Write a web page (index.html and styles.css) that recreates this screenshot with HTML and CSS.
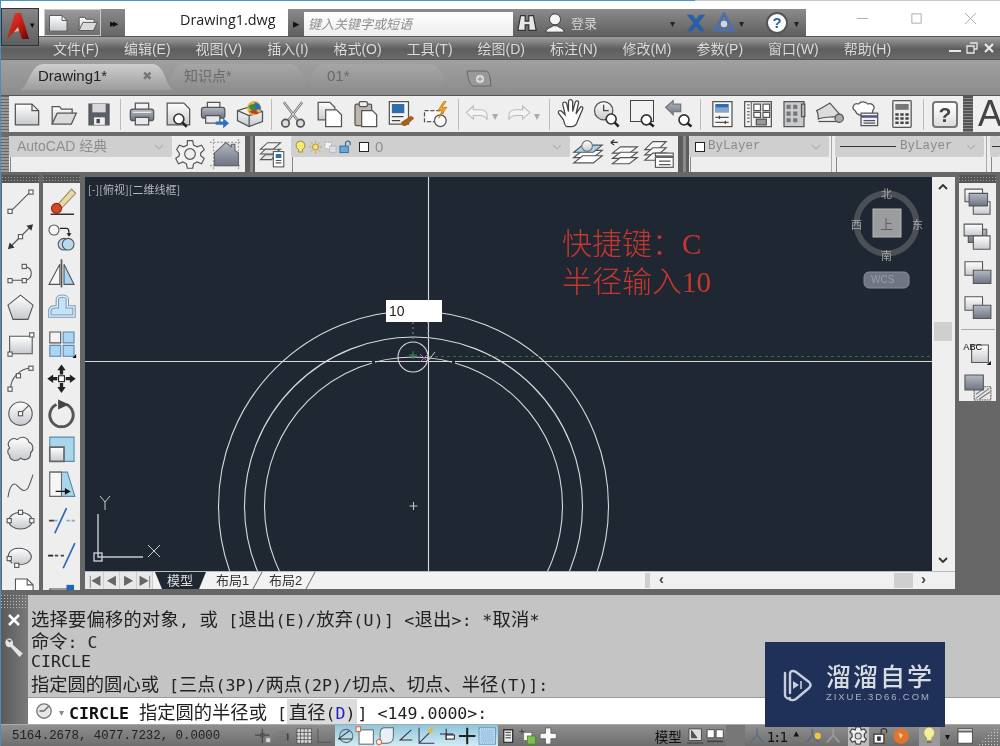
FILE: index.html
```html
<!DOCTYPE html>
<html lang="zh">
<head>
<meta charset="utf-8">
<title>AutoCAD - Drawing1.dwg</title>
<link rel="stylesheet" href="styles.css">
</head>
<body>
<svg class="defs" aria-hidden="true">
  <defs>
    <linearGradient id="gw" x1="0" y1="0" x2="0" y2="1"><stop offset="0" stop-color="#fff"/><stop offset="1" stop-color="#c6c9ce"/></linearGradient>
    <linearGradient id="gd" x1="0" y1="0" x2="0" y2="1"><stop offset="0" stop-color="#b5bac4"/><stop offset="1" stop-color="#6d7482"/></linearGradient>
    <linearGradient id="gb" x1="0" y1="0" x2="0" y2="1"><stop offset="0" stop-color="#cfe8f6"/><stop offset="1" stop-color="#93c6e6"/></linearGradient>
    <linearGradient id="gr" x1="0" y1="0" x2="1" y2="1"><stop offset="0" stop-color="#ec4033"/><stop offset=".6" stop-color="#b81a12"/><stop offset="1" stop-color="#5e0806"/></linearGradient>

    <symbol id="new" viewBox="0 0 36 36"><path d="M4 6h20l8 8v17H4z" fill="url(#gw)"/><path d="M24 6v8h8"/></symbol>
    <symbol id="open" viewBox="0 0 36 36"><path d="M5 30V9h9l2 3h13v5" fill="url(#gw)"/><path d="M5 30l6-13h23l-6 13z" fill="#d9dadb"/></symbol>
    <symbol id="save" viewBox="0 0 36 36"><path d="M6 6h24v25H6z" fill="#595e68"/><path d="M10 6h16v10H10z" fill="#d6d8dc" stroke="none"/><path d="M12 22h13v9H12z" fill="#eee" stroke="none"/><path d="M15 24h4v5h-4z" fill="#444" stroke="none"/></symbol>
    <symbol id="print" viewBox="0 0 36 36"><path d="M10 12V5h16v7" fill="#f3f3f3"/><rect x="4" y="12" width="28" height="14" rx="3" fill="url(#gd)"/><path d="M10 22h16v9H10z" fill="#e7e9ec"/><path d="M7 16h22" stroke="#eee"/></symbol>
    <symbol id="prev" viewBox="0 0 36 36"><path d="M5 5h20l7 7v19H5z" fill="url(#gw)"/><circle cx="19" cy="24" r="6" fill="#fff" stroke="#333" stroke-width="2"/><path d="M23.500 28.500l5 5" stroke="#222" stroke-width="3"/></symbol>
    <symbol id="plot" viewBox="0 0 36 36"><path d="M10 10V4h15v6" fill="#f3f3f3"/><rect x="3" y="10" width="28" height="13" rx="3" fill="url(#gd)"/><path d="M8 20h17v9H8z" fill="#e7e9ec"/><path d="M20 27h9v-4l7 6-7 6v-4h-9z" fill="#2a72c6" stroke="none"/></symbol>
    <symbol id="ball" viewBox="0 0 36 36"><path d="M3 14l16-5 14 6v12l-16 6-14-7z" fill="url(#gw)"/><path d="M3 14l14 6v13M17 20l16-5"/><circle cx="23" cy="11" r="8.500" fill="#e0b33a" stroke="none"/><path d="M16 9c5-5 11-3 14 1l-8 7z" fill="#3d8a3c" stroke="none"/><path d="M23 4a8 8 0 0 1 8 9l-6-1z" fill="#2a6cc4" stroke="none"/><path d="M17 15c3 3 8 4 12 2l-5-4z" fill="#c23a35" stroke="none"/></symbol>
    <symbol id="cut" viewBox="0 0 36 36"><path d="M7 4l17 22M29 4L12 26" stroke="#777" stroke-width="3"/><path d="M7 4l17 22M29 4L12 26" stroke="#eee" stroke-width="1"/><circle cx="9" cy="29" r="4.500" fill="#ddd" stroke-width="2"/><circle cx="27" cy="29" r="4.500" fill="#ddd" stroke-width="2"/></symbol>
    <symbol id="copy" viewBox="0 0 36 36"><path d="M5 4h14l6 6v15H5z" fill="url(#gw)"/><path d="M14 13h13l6 6v14H14z" fill="#fff"/></symbol>
    <symbol id="paste" viewBox="0 0 36 36"><rect x="6" y="6" width="20" height="26" rx="2" fill="#bcb6ab"/><rect x="11" y="3" width="10" height="6" rx="2" fill="#eee"/><path d="M14 14h13l5 5v14H14z" fill="#fff"/></symbol>
    <symbol id="match" viewBox="0 0 36 36"><path d="M4 3h23v27H4z" fill="#f7f7f7"/><path d="M7 6h15v11H7z" fill="#2f6ea8" stroke="none"/><path d="M7 21h14M7 26h10" stroke="#444"/><path d="M18 28l12-8 4 3-10 9c-3 1-6 0-6-4z" fill="#a75f1d" stroke="none"/></symbol>
    <symbol id="bolt" viewBox="0 0 36 36"><rect x="3" y="14" width="22" height="13" fill="#fbfbfb" stroke-dasharray="5 2"/><circle cx="22" cy="26" r="7" fill="#fafafa"/><path d="M26 3l-7 11h5l-4 9 10-13h-6l5-7z" fill="#f0a51e" stroke="#b96d10" stroke-width=".8"/></symbol>
    <symbol id="undo" viewBox="0 0 36 36"><path d="M3 16l10-9v5h9c7 0 10 4 10 8v6c-2-5-5-6-10-6h-9v5z" fill="#f4f4f4" stroke="#bbb"/></symbol>
    <symbol id="redo" viewBox="0 0 36 36"><path d="M33 16L23 7v5h-9C7 12 4 16 4 20v6c2-5 5-6 10-6h9v5z" fill="#f4f4f4" stroke="#bbb"/></symbol>
    <symbol id="hand" viewBox="0 0 36 36"><path d="M9 25L3 17c-1-3 2-4 4-2l4 4L8 6c0-3 4-3 5 0l2 9V3c0-3 4-3 5 0v12l3-11c1-3 5-2 4 1l-3 13 5-8c2-2 4 0 3 2l-6 14c-1 4-3 7-7 7h-6c-2 0-3-4-4-8z" fill="#fff" stroke="#444"/></symbol>
    <symbol id="zrt" viewBox="0 0 36 36"><circle cx="14" cy="14" r="11" fill="url(#gw)"/><path d="M14 7v7h6" stroke="#444"/><circle cx="23" cy="24" r="6" fill="#fff" stroke="#333" stroke-width="2"/><path d="M27 28l5 5" stroke="#222" stroke-width="3"/></symbol>
    <symbol id="zwin" viewBox="0 0 36 36"><circle cx="22" cy="25" r="6" fill="#fff" stroke="#333" stroke-width="2"/><path d="M26 29l5 4" stroke="#222" stroke-width="3"/></symbol>
    <symbol id="zprev" viewBox="0 0 36 36"><path d="M2 10l9-8v4h9v9h-9v4z" fill="url(#gd)" stroke="#777"/><circle cx="24" cy="25" r="6" fill="#fff" stroke="#333" stroke-width="2"/><path d="M28 29l5 4" stroke="#222" stroke-width="3"/></symbol>
    <symbol id="prop" viewBox="0 0 36 36"><path d="M7 3h23v30H7z" fill="#f7f7f7"/><path d="M10 6h16v10H10z" fill="#2f6ea8" stroke="none"/><path d="M10 10h16v6H10z" fill="#85a7c9" stroke="none"/><path d="M10 22h16M10 28h16"/><path d="M15 20v4M22 26v4" stroke="#444"/></symbol>
    <symbol id="design" viewBox="0 0 36 36"><path d="M2 3h32v30H2z" fill="#f3f3f3"/><path d="M10 3v30" stroke="#777"/><path d="M5 7h3M5 11h3M5 15h3M5 19h3M5 23h3M5 27h3" stroke="#666"/><path d="M13 6h8v8h-8zM24 6h8v8h-8zM13 16h8v6h-8zM24 16h8v6h-8z" fill="#fff" stroke="#555"/><path d="M16 24h12v7H16z" fill="#999"/></symbol>
    <symbol id="tool" viewBox="0 0 36 36"><path d="M6 3h24v30H6z" fill="#c9cbce"/><path d="M9 7h5v5H9zM17 7h5v5h-5zM9 15h5v5H9zM17 15h5v5h-5zM9 23h5v5H9zM17 23h5v5h-5z" fill="#777" stroke="none"/><path d="M27 6h4v15h-4z" fill="#bbb"/></symbol>
    <symbol id="sheet" viewBox="0 0 36 36"><path d="M2 14c6-3 12-7 16-9l14 16c-6 0-22 0-28 3 0-4 0-7-2-10z" fill="#ddd"/><path d="M4 27h24" stroke="#555"/><circle cx="29" cy="23" r="5" fill="#aaa"/></symbol>
    <symbol id="markup" viewBox="0 0 36 36"><path d="M5 14c-5-3-2-10 4-8 3-4 9-3 11 0 6-2 10 4 6 8 1 5-6 7-9 4-3 3-10 2-12-4z" fill="#fff"/><path d="M12 17h20v15H12z" fill="#eef"/><path d="M12 21h20" stroke="#557" stroke-width="3"/><path d="M15 26h14M15 29h14"/></symbol>
    <symbol id="calc" viewBox="0 0 36 36"><rect x="7" y="2" width="22" height="32" rx="1" fill="#eee"/><path d="M10 6h16v7H10z" fill="#777" stroke="none"/><path d="M10 17h4v3h-4zM16 17h4v3h-4zM22 17h4v3h-4zM10 22h4v3h-4zM16 22h4v3h-4zM22 22h4v3h-4zM10 27h4v3h-4zM16 27h4v3h-4zM22 27h4v3h-4z" fill="#444" stroke="none"/></symbol>

    <symbol id="gear" viewBox="0 0 36 36"><path d="M15 3h6l1 5 4 2 5-2 3 5-4 4v3l4 3-3 6-5-2-4 2-1 5h-6l-1-5-4-2-5 2-3-6 4-3v-3L3 13l3-5 5 2 4-2z" fill="#f2f2f2"/><circle cx="18" cy="18" r="6" fill="#eee"/></symbol>
    <symbol id="home" viewBox="0 0 36 36"><path d="M4 1v34M32 1v34M0 5h36M0 31h36" stroke="#999" stroke-dasharray="2 2"/><path d="M5 17L18 5l6 5V7h4v7l4 3v14H5z" fill="url(#gd)" stroke="#666"/></symbol>
    <symbol id="lay1" viewBox="0 0 36 36"><path d="M3 12l9-8h16l-9 8z" fill="#f1f1f1"/><path d="M3 18l6-6h19l-9 6z" fill="#e6e6e6"/><path d="M3 25l6-6h12l-4 6z" fill="#e6e6e6"/><rect x="19" y="15" width="13" height="19" fill="#fff"/><path d="M22 18h7v5h-7z" fill="#2f6ea8" stroke="none"/><path d="M22 26h7M22 29h7"/></symbol>
    <symbol id="lay2" viewBox="0 0 36 36"><path d="M2 22l10-8h22l-10 8z" fill="#fff"/><path d="M2 28l10-8h22l-10 8z" fill="#fff"/><path d="M2 16l10-8h22l-10 8z" fill="#a5d5f0"/><circle cx="17" cy="9" r="6" fill="url(#gw)" stroke="#777"/></symbol>
    <symbol id="lay3" viewBox="0 0 36 36"><path d="M3 5h8M3 5l4-3M3 5l4 3" stroke="#333"/><path d="M5 17l9-7h19l-9 7z" fill="#fafafa"/><path d="M5 23l9-7h19l-9 7z" fill="#fafafa"/><path d="M5 29l9-7h19l-9 7z" fill="#fafafa"/></symbol>
    <symbol id="lay4" viewBox="0 0 36 36"><path d="M2 13l9-9h15l-9 9z" fill="#fafafa"/><path d="M2 19l9-8h15l-9 8z" fill="#fafafa"/><path d="M2 25l9-8h15l-9 8z" fill="#fafafa"/><rect x="14" y="17" width="20" height="16" fill="#fff"/><path d="M14 21h20" stroke="#666" stroke-width="3"/><path d="M18 26h13M18 30h13"/></symbol>

    <symbol id="l-line" viewBox="0 0 36 36"><path d="M6 30L30 6"/><rect x="3" y="27" width="5" height="5" fill="#fff"/><rect x="28" y="4" width="5" height="5" fill="#fff"/></symbol>
    <symbol id="l-xline" viewBox="0 0 36 36"><path d="M5 31L31 5" stroke-width="1.500"/><path d="M3 33l2-8 6 6zM33 3l-2 8-6-6z" fill="#333" stroke="none"/><rect x="15.500" y="15.500" width="5" height="5" fill="#fff"/></symbol>
    <symbol id="l-pline" viewBox="0 0 36 36"><path d="M6 27h19c8-3 8-15-1-16"/><rect x="3" y="25" width="5" height="5" fill="#fff"/><rect x="20" y="25" width="5" height="5" fill="#fff"/><rect x="20" y="8" width="5" height="5" fill="#fff"/></symbol>
    <symbol id="l-poly" viewBox="0 0 36 36"><path d="M18 3l15 12-6 17H9L3 15z" fill="url(#gw)"/></symbol>
    <symbol id="l-rect" viewBox="0 0 36 36"><path d="M5 9h27v21H5z" fill="url(#gw)"/><rect x="29" y="5" width="5" height="5" fill="#fff"/><rect x="3" y="28" width="5" height="5" fill="#fff"/></symbol>
    <symbol id="l-arc" viewBox="0 0 36 36"><path d="M6 31C6 17 17 6 31 5"/><rect x="3" y="28" width="5" height="5" fill="#fff"/><rect x="13" y="12" width="5" height="5" fill="#fff"/><rect x="28" y="3" width="5" height="5" fill="#fff"/></symbol>
    <symbol id="l-circle" viewBox="0 0 36 36"><circle cx="18" cy="18" r="14" fill="url(#gw)"/><path d="M18 18L28 8"/><rect x="15.500" y="15.500" width="5" height="5" fill="#fff"/></symbol>
    <symbol id="l-cloud" viewBox="0 0 36 36"><path d="M5 16C0 9 8 2 14 6c5-5 13-3 14 3 6 2 6 10 2 13 1 7-7 10-12 6-4 5-13 3-13-3-3-3-3-7 0-9z" fill="url(#gw)"/></symbol>
    <symbol id="l-spl" viewBox="0 0 36 36"><path d="M3 33C5 20 9 14 14 19c5 5 9 9 13 3 2-4 4-10 6-16"/></symbol>
    <symbol id="l-ell" viewBox="0 0 36 36"><ellipse cx="18" cy="18" rx="14" ry="10" fill="url(#gw)"/><rect x="15.500" y="5.500" width="5" height="5" fill="#fff"/><rect x="2" y="15.500" width="5" height="5" fill="#fff"/><rect x="29" y="15.500" width="5" height="5" fill="#fff"/></symbol>
    <symbol id="l-earc" viewBox="0 0 36 36"><path d="M8 27c-9-7-4-18 8-18 12 0 18 9 13 15-3 4-9 5-16 5" fill="url(#gw)"/><rect x="2" y="19" width="5" height="5" fill="#fff"/><rect x="11" y="27" width="5" height="5" fill="#fff"/></symbol>
    <symbol id="l-block" viewBox="0 0 36 36"><path d="M12 4h14l7 7v20H12z" fill="#fff"/><path d="M26 4v7h7"/><path d="M2 20h20v14H2z" fill="#eee"/></symbol>

    <symbol id="r-erase" viewBox="0 0 36 36"><path d="M5 33h28" stroke="#333" stroke-width="2"/><path d="M13 22L30 3l5 5-17 18z" fill="#e8d9a8" stroke="#9c8a60"/><circle cx="12" cy="26" r="6" fill="#d4482a" stroke="#8a2a15"/></symbol>
    <symbol id="r-copy" viewBox="0 0 36 36"><circle cx="9" cy="10" r="6" fill="#f7f7f7"/><path d="M16 8h8c3 0 3 3 3 7" stroke="#222"/><path d="M24 14l3 4 3-4z" fill="#222" stroke="none"/><circle cx="21" cy="27" r="7" fill="#b6daf2"/><circle cx="26" cy="27" r="7" fill="#b6daf2"/></symbol>
    <symbol id="r-mirror" viewBox="0 0 36 36"><path d="M3 32L16 8v24z" fill="#f7f7f7"/><path d="M18 2v34" stroke="#555" stroke-width="2"/><path d="M21 8l12 24H21z" fill="#a8d6f3"/></symbol>
    <symbol id="r-off" viewBox="0 0 36 36"><path d="M4 28v-6c0-3 2-5 6-5h3V8c0-5 12-5 12 0v9h8v11z" fill="#c6e2f4" stroke="#6f9cc0" stroke-width="4"/><path d="M4 28v-6c0-3 2-5 6-5h3V8c0-5 12-5 12 0v9h8v11z" fill="none" stroke="#f4f4f4" stroke-width="1.500"/></symbol>
    <symbol id="r-arr" viewBox="0 0 36 36"><path d="M4 4h13v13H4z" fill="#f3f3f3"/><path d="M20 4h13v13H20zM4 20h13v13H4zM20 20h13v13H20z" fill="#a8d6f3" stroke="#5c87a8"/><path d="M31 35l5-5v5z" fill="#111" stroke="none"/></symbol>
    <symbol id="r-move" viewBox="0 0 36 36"><path d="M18 1l5 7h-3v5h-4V8h-3zM18 35l-5-7h3v-5h4v5h3zM1 18l7-5v3h5v4H8v3zM35 18l-7 5v-3h-5v-4h5v-3z" fill="#222" stroke="none"/><rect x="14.500" y="14.500" width="7" height="7" fill="#fff" stroke="#222"/></symbol>
    <symbol id="r-rot" viewBox="0 0 36 36"><path d="M12 7a14 14 0 1 0 12 0" stroke="#555" stroke-width="3.500"/><path d="M14 1l13 6-13 6z" fill="#444" stroke="none"/></symbol>
    <symbol id="r-scale" viewBox="0 0 36 36"><path d="M4 3h29v29H4z" fill="#a8d6ea" stroke="#5c87a8"/><path d="M4 15h17v17H4z" fill="url(#gw)" stroke="#666" stroke-width="2"/></symbol>
    <symbol id="r-str" viewBox="0 0 36 36"><path d="M4 3h21l9 29H4z" fill="#a8d6ea" stroke="#5c87a8"/><path d="M4 3h14v29H4z" fill="#f6f6f6" stroke="#666"/><path d="M11 26h14" stroke="#111"/><path d="M22 22l7 4-7 4z" fill="#111" stroke="none"/></symbol>
    <symbol id="r-trim" viewBox="0 0 36 36"><path d="M3 18h6" stroke="#444" stroke-width="2"/><path d="M24 18h10" stroke="#87a9c9" stroke-width="2" stroke-dasharray="4 2"/><path d="M9 18h4" stroke="#87a9c9" stroke-width="2"/><path d="M10 33L24 3" stroke="#2a68b5" stroke-width="2"/></symbol>
    <symbol id="r-ext" viewBox="0 0 36 36"><path d="M2 18h6" stroke="#222" stroke-width="2"/><path d="M10 18h13" stroke="#444" stroke-width="2" stroke-dasharray="4 3"/><path d="M20 33L34 3" stroke="#2a68b5" stroke-width="2"/></symbol>
    <symbol id="r-brk" viewBox="0 0 36 36"><path d="M4 36V16h29" stroke="#444"/><rect x="24" y="11" width="9" height="9" fill="#1d66b8" stroke="none"/></symbol>

    <symbol id="o-a" viewBox="0 0 36 36"><path d="M3 3h21v15H3z" fill="url(#gw)"/><path d="M13 18h20v15H13z" fill="url(#gw)"/><path d="M8 8h22v15H8z" fill="url(#gd)"/></symbol>
    <symbol id="o-b" viewBox="0 0 36 36"><path d="M7 9h22v16H7z" fill="url(#gd)"/><path d="M2 3h22v14H2z" fill="url(#gw)"/><path d="M13 17h20v16H13z" fill="url(#gw)"/></symbol>
    <symbol id="o-c" viewBox="0 0 36 36"><path d="M3 5h21v16H3z" fill="url(#gw)"/><path d="M13 15h21v16H13z" fill="url(#gd)"/></symbol>
    <symbol id="o-e" viewBox="0 0 36 36"><path d="M14 18h20v16H14z" fill="#e8e8e8" stroke-dasharray="2 1"/><path d="M16 32l16-12M20 33l13-9M16 27l10-7" stroke="#777"/><path d="M3 4h22v18H3z" fill="url(#gd)"/></symbol>

    <symbol id="s-snap" viewBox="0 0 20 20"><path d="M9 2v16M1 9h16" stroke="#333"/><rect x="6.500" y="6.500" width="5" height="5" fill="#555" stroke="none"/><rect x="13" y="12" width="5" height="5" fill="#ddd" stroke="#888"/></symbol>
    <symbol id="s-dots" viewBox="0 0 20 20"><path d="M4 5h9M4 8h9M4 11h9M4 14h9" stroke="#666" stroke-dasharray="1 1.500"/><path d="M15 7v8" stroke="#444" stroke-width="2"/></symbol>
    <symbol id="s-grid" viewBox="0 0 20 20"><path d="M2 2h16v16H2zM2 6h16M2 10h16M2 14h16M6 2v16M10 2v16M14 2v16" stroke="#444" fill="#ddd" stroke-width=".8"/></symbol>
    <symbol id="s-ortho" viewBox="0 0 20 20"><path d="M3 2v15h15" stroke="#555"/></symbol>
    <symbol id="s-polar" viewBox="0 0 20 20"><circle cx="11" cy="10" r="6.500" stroke="#667"/><path d="M3 13L14 5M3 13h14" stroke="#333"/></symbol>
    <symbol id="s-osnap" viewBox="0 0 20 20"><rect x="4" y="4" width="14" height="14" fill="#fff" stroke="#666"/><rect x="1" y="1" width="4.500" height="4.500" fill="#fff" stroke="#d2643e"/></symbol>
    <symbol id="s-3d" viewBox="0 0 20 20"><path d="M5 14V7c0-3 2-5 5-5h8v9c0 4-3 6-6 6H6" fill="#e8f1f6" stroke="#666"/><circle cx="4" cy="16" r="2.500" fill="#fff" stroke="#d2643e"/></symbol>
    <symbol id="s-otrack" viewBox="0 0 20 20"><path d="M15 4L4 14h12" stroke="#333"/></symbol>
    <symbol id="s-ducs" viewBox="0 0 20 20"><path d="M3 2v15h15M3 17L15 5" stroke="#335"/><path d="M12 4l5-3-1 5-3 2z" fill="#e8b63a" stroke="none"/></symbol>
    <symbol id="s-dyn" viewBox="0 0 20 20"><path d="M9 3v11M3 8h13" stroke="#222"/><rect x="9" y="9" width="8" height="4" fill="#fff" stroke="#222"/></symbol>
    <symbol id="s-lw" viewBox="0 0 20 20"><path d="M10 2v16" stroke="#222" stroke-width="2"/><path d="M2 10h16" stroke="#222" stroke-width="2"/></symbol>
    <symbol id="s-tp" viewBox="0 0 20 20"><rect x="2" y="2" width="16" height="16" fill="#a5c9e8" stroke="#6a93b8"/><path d="M3 3h14v14H3z" fill="none" stroke="#e6f2fa" stroke-dasharray="1 1"/></symbol>
    <symbol id="s-qp" viewBox="0 0 20 20"><path d="M5 3h10v14H5z" fill="#eee" stroke="#333" stroke-width="1.500"/><path d="M7 6h6M7 9h6M7 12h6" stroke="#222"/></symbol>
    <symbol id="s-sc" viewBox="0 0 20 20"><path d="M3 2v6M0 5h6" stroke="#444"/><rect x="5" y="6" width="9" height="9" fill="#fff" stroke="#777"/><rect x="9" y="10" width="9" height="9" fill="#7fbf4d" stroke="#4c8c2a"/></symbol>
    <symbol id="s-plus" viewBox="0 0 20 20"><path d="M7 1h6v6h6v6h-6v6H7v-6H1V7h6z" fill="#fafafa" stroke="#666"/></symbol>
    <symbol id="s-paper" viewBox="0 0 20 20"><path d="M3 2h14v13H3z" fill="#ddd" stroke="#444"/><path d="M6 12V4l6 8z" fill="#555"/><path d="M1 18h18" stroke="#555" stroke-width="2"/></symbol>
    <symbol id="s-twin" viewBox="0 0 20 20"><path d="M1 3h8v9H1zM11 3h8v9h-8z" fill="#fff" stroke="#444"/><path d="M1 16h18" stroke="#444" stroke-width="2"/></symbol>
    <symbol id="s-anno" viewBox="0 0 20 20"><path d="M10 2v7L3 17M10 9l7 8" stroke="#5d6b84" stroke-width="1.500"/></symbol>
    <symbol id="s-anno2" viewBox="0 0 20 20"><path d="M9 2v7L3 17M9 9l7 8" stroke="#5d6b84" stroke-width="2"/><circle cx="15" cy="10" r="3.500" fill="#f1c33f" stroke="none"/></symbol>
    <symbol id="s-anno3" viewBox="0 0 20 20"><path d="M10 2v7L3 17M10 9l7 8" stroke="#999" stroke-width="2"/></symbol>
    <symbol id="s-gear" viewBox="0 0 20 20"><path d="M8 1h4l1 3 3-1 2 3-2 2v3l2 2-2 3-3-1-1 3H8l-1-3-3 1-2-3 2-2V8L2 6l2-3 3 1z" fill="#eee" stroke="#444" stroke-width="1.200"/><circle cx="10" cy="10" r="3" fill="#ddd" stroke="#444"/></symbol>
    <symbol id="s-lock" viewBox="0 0 20 20"><rect x="2" y="8" width="11" height="10" fill="#fff" stroke="#333" stroke-width="1.300"/><path d="M10 8V4c0-3 6-3 6 0v3" stroke="#333" stroke-width="1.300"/><rect x="6" y="11" width="3" height="4" fill="#333"/></symbol>
    <symbol id="s-ball" viewBox="0 0 20 20"><circle cx="10" cy="10" r="8.500" fill="#e0762e" stroke="none"/><path d="M7 6l5 3-3 4z" fill="#f5c896" stroke="none"/></symbol>
    <symbol id="s-bulb" viewBox="0 0 20 20"><path d="M10 1a6.500 6.500 0 0 0-3 12v3h6v-3a6.500 6.500 0 0 0-3-12z" fill="#f7ee9a" stroke="#a49a50"/><path d="M7.500 18h5" stroke="#666" stroke-width="1.500"/></symbol>
    <symbol id="s-win" viewBox="0 0 20 20"><rect x="2" y="2" width="16" height="16" fill="#fff" stroke="#444"/><path d="M2 5h16" stroke="#666" stroke-width="2"/></symbol>
  </defs>
</svg>

<div class="app">
  <div class="topline"></div>

  <div class="appbtn">
    <svg class="applogo" viewBox="0 0 22 26"><path d="M8 0h6l8 26h-7l-4-12-4 5-7 7z" fill="url(#gr)"/><path d="M7 19l4-5 1 4z" fill="#f4b0a0"/></svg>
    <span class="apparr">▾</span>
  </div>

  <header class="titlebar">
    <div class="qat">
      <svg class="q"><use href="#new"/></svg>
      <svg class="q"><use href="#open"/></svg>
    </div>
    <div class="qat-more">▸▸</div>
    <div class="doc">Drawing1.dwg</div>
    <div class="infobar">
      <span class="info-tri">▸</span>
      <div class="search">键入关键字或短语</div>
      <svg class="bi" viewBox="0 0 24 24"><path d="M5 4h5v6h4V4h5l3 16h-8v-6h-4v6H2z" fill="#e8e8e8" stroke="#333" stroke-width="1.300"/></svg>
      <svg class="bi user" viewBox="0 0 24 24"><circle cx="12" cy="8" r="6" fill="#f4f4f4" stroke="#333"/><path d="M2 22c1-5 6-5 8-7h4c2 2 7 2 8 7z" fill="#f4f4f4" stroke="#333"/></svg>
      <span class="login">登录</span>
      <span class="arr login-arr">▾</span>
      <svg class="bi x" viewBox="0 0 24 24"><path d="M2 3h6l4 5 4-5h6l-7 9 7 9h-6l-4-5-4 5H2l7-9z" fill="#2a5ea8"/></svg>
      <svg class="bi a360" viewBox="0 0 24 24"><path d="M12 2l10 18H2z" fill="none" stroke="#4a6fae" stroke-width="3"/><circle cx="12" cy="13" r="3.500" fill="#c8d6ee"/></svg>
      <span class="arr a360-arr">▾</span>
      <span class="help-round">?</span>
      <span class="arr">▾</span>
    </div>
    <div class="winctl">
      <svg class="wc" viewBox="0 0 14 14"><path d="M1 7h12"/></svg>
      <svg class="wc" viewBox="0 0 14 14"><path d="M2 2h10v10H2z"/></svg>
      <svg class="wc" viewBox="0 0 14 14"><path d="M1 1l12 12M13 1L1 13"/></svg>
    </div>
  </header>

  <nav class="menubar">
    <span>文件(F)</span><span>编辑(E)</span><span>视图(V)</span><span>插入(I)</span><span>格式(O)</span><span>工具(T)</span><span>绘图(D)</span><span>标注(N)</span><span>修改(M)</span><span>参数(P)</span><span>窗口(W)</span><span>帮助(H)</span>
    <div class="mdi">
      <svg class="m" viewBox="0 0 12 12"><path d="M0 9h12" stroke-width="2"/></svg>
      <svg class="m" viewBox="0 0 12 12"><path d="M4 1h7v6H8M1 4h7v7H1z" stroke-width="1.300"/></svg>
      <svg class="m" viewBox="0 0 12 12"><path d="M2 2l8 8M10 2l-8 8" stroke-width="2.200"/></svg>
    </div>
  </nav>

  <div class="tabs">
    <div class="tab active"><span>Drawing1*</span><b>✖</b></div>
    <div class="tab t2"><span>知识点*</span></div>
    <div class="tab t3"><span>01*</span></div>
    <svg class="tabplus" viewBox="0 0 26 18"><path d="M1 2h18c3 0 4 2 5 6l1 9H8C4 17 2 10 1 2z" fill="#999" stroke="#666"/><circle cx="14" cy="10" r="4" fill="#ddd"/><path d="M14 7.500v5M11.500 10h5" stroke="#888"/></svg>
  </div>

  <div class="tb1">
    <i class="grip"></i>
    <svg class="b"><use href="#new"/></svg>
    <svg class="b"><use href="#open"/></svg>
    <svg class="b"><use href="#save"/></svg>
    <i class="sep"></i>
    <svg class="b"><use href="#print"/></svg>
    <svg class="b"><use href="#prev"/></svg>
    <svg class="b"><use href="#plot"/></svg>
    <svg class="b"><use href="#ball"/></svg>
    <i class="sep"></i>
    <svg class="b"><use href="#cut"/></svg>
    <svg class="b"><use href="#copy"/></svg>
    <svg class="b"><use href="#paste"/></svg>
    <svg class="b"><use href="#match"/></svg>
    <svg class="b"><use href="#bolt"/></svg>
    <i class="sep"></i>
    <svg class="b n"><use href="#undo"/></svg><span class="dn">▾</span>
    <svg class="b n"><use href="#redo"/></svg><span class="dn">▾</span>
    <i class="sep"></i>
    <svg class="b"><use href="#hand"/></svg>
    <svg class="b"><use href="#zrt"/></svg>
    <div class="zwin"><svg class="b"><use href="#zwin"/></svg></div>
    <svg class="b"><use href="#zprev"/></svg>
    <i class="sep"></i>
    <svg class="b"><use href="#prop"/></svg>
    <svg class="b"><use href="#design"/></svg>
    <svg class="b"><use href="#tool"/></svg>
    <svg class="b"><use href="#sheet"/></svg>
    <svg class="b"><use href="#markup"/></svg>
    <svg class="b"><use href="#calc"/></svg>
    <i class="sep"></i>
    <div class="helpbtn">?</div>
    <i class="grip dark"></i>
    <div class="bigA">A</div>
  </div>

  <div class="tb2">
    <section class="panel p1">
      <i class="grip"></i>
      <div class="combo-col w162">
        <div class="combo"><span class="wk">AutoCAD 经典</span><svg class="cv" viewBox="0 0 10 6"><path d="M1 1l4 4 4-4"/></svg></div>
        <div class="under"></div>
      </div>
      <svg class="c"><use href="#gear"/></svg>
      <svg class="c"><use href="#home"/></svg>
    </section>
    <i class="gapgrip"></i>
    <section class="panel p2">
      <svg class="c lay"><use href="#lay1"/></svg>
      <div class="combo-col w279">
        <div class="combo">
          <svg class="mini" viewBox="0 0 12 14"><path d="M6 1a4.500 4.500 0 0 0-2 8.500V12h4V9.500A4.500 4.500 0 0 0 6 1z" fill="#f7ea72" stroke="#998f3c"/></svg>
          <svg class="mini" viewBox="0 0 14 14"><circle cx="7" cy="7" r="3.200" fill="#f7e26a" stroke="#a5923c"/><path d="M7 0v2.500M7 11.500V14M0 7h2.500M11.500 7H14M2 2l2 2M10 10l2 2M2 12l2-2M10 4l2-2" stroke="#c4a63d"/></svg>
          <svg class="mini" viewBox="0 0 14 14"><path d="M1 2h7v7H1z" fill="#f4f4f4" stroke="#aaa" stroke-dasharray="2 1"/><path d="M6 6h7v7H6z" fill="#ddd" stroke="#aaa" stroke-dasharray="2 1"/></svg>
          <svg class="mini" viewBox="0 0 14 14"><rect x="1" y="6" width="9" height="7" fill="#6aa6d8" stroke="#2c6aa0"/><path d="M7 6V3c0-3 5-3 5 0v2" fill="none" stroke="#2c6aa0" stroke-width="1.300"/></svg>
          <span class="swatch s-layer"></span>
          <span class="wk zero">0</span><svg class="cv" viewBox="0 0 10 6"><path d="M1 1l4 4 4-4"/></svg>
        </div>
        <div class="under"></div>
      </div>
      <svg class="c"><use href="#lay2"/></svg>
      <svg class="c"><use href="#lay3"/></svg>
      <svg class="c last"><use href="#lay4"/></svg>
    </section>
    <i class="gapgrip g11"></i>
    <section class="panel p3">
      <div class="combo-col w139">
        <div class="combo serif"><span class="swatch"></span><span class="by">ByLayer</span><svg class="cv" viewBox="0 0 10 6"><path d="M1 1l4 4 4-4"/></svg></div>
        <div class="under"></div>
      </div>
      <i class="vsep"></i>
      <div class="combo-col w149">
        <div class="combo serif"><i class="ltline"></i><span class="by">ByLayer</span><svg class="cv" viewBox="0 0 10 6"><path d="M1 1l4 4 4-4"/></svg></div>
        <div class="under"></div>
      </div>
      <i class="vsep"></i>
      <div class="combo-col w9"><div class="combo"><i class="ltline short"></i></div><div class="under"></div></div>
    </section>
  </div>

  <main class="work">
    <aside class="lefts">
      <div class="vbar">
        <i class="vgrip"></i>
        <svg class="v"><use href="#l-line"/></svg>
        <svg class="v"><use href="#l-xline"/></svg>
        <svg class="v"><use href="#l-pline"/></svg>
        <svg class="v"><use href="#l-poly"/></svg>
        <svg class="v"><use href="#l-rect"/></svg>
        <svg class="v"><use href="#l-arc"/></svg>
        <svg class="v"><use href="#l-circle"/></svg>
        <svg class="v"><use href="#l-cloud"/></svg>
        <svg class="v"><use href="#l-spl"/></svg>
        <svg class="v"><use href="#l-ell"/></svg>
        <svg class="v"><use href="#l-earc"/></svg>
        <svg class="v"><use href="#l-block"/></svg>
      </div>
      <div class="vbar">
        <i class="vgrip"></i>
        <svg class="v"><use href="#r-erase"/></svg>
        <svg class="v"><use href="#r-copy"/></svg>
        <svg class="v"><use href="#r-mirror"/></svg>
        <svg class="v"><use href="#r-off"/></svg>
        <svg class="v"><use href="#r-arr"/></svg>
        <svg class="v"><use href="#r-move"/></svg>
        <svg class="v"><use href="#r-rot"/></svg>
        <svg class="v"><use href="#r-scale"/></svg>
        <svg class="v"><use href="#r-str"/></svg>
        <svg class="v"><use href="#r-trim"/></svg>
        <svg class="v"><use href="#r-ext"/></svg>
        <svg class="v"><use href="#r-brk"/></svg>
      </div>
    </aside>

    <div class="center">
      <div class="viewrow">
        <div class="canvas">
          <svg class="draw" viewBox="85 178 847 394">
            <g class="w">
              <circle cx="413.500" cy="507" r="195"/>
              <circle cx="413.500" cy="507" r="169"/>
              <circle cx="413.500" cy="507" r="149"/>
              <circle cx="413" cy="358" r="15"/>
              <path d="M85 362.500H932"/>
              <path d="M428.500 178V572"/>
            </g>
            <path class="gap" d="M372 360h3v7h-3zM452 360h3v7h-3z"/>
            <path class="dash-g" d="M429 357.500H932"/>
            <path class="dash-w" d="M413 323V343M428 323V343"/>
            <path class="tick-g" d="M413 352v8M409 356h8"/>
            <path class="tick-m" d="M420 355l8 8M420 363l8-8"/>
            <path class="tick-w" d="M428 362l7-9"/>
            <path class="cross" d="M413.500 503v8M409.500 507h8"/>
            <g class="ucs">
              <path d="M98 515V558H143"/>
              <rect x="94" y="554" width="8" height="8"/>
              <path class="thin" d="M100 497l5 6v8M110 497l-5 6M148 546l12 12M160 546l-12 12"/>
            </g>
            <circle class="ring" cx="886.500" cy="224.500" r="30"/>
            <rect class="cube" x="873" y="210" width="28" height="28"/>
            <rect class="wcs" x="864" y="273" width="45" height="16" rx="5"/>
          </svg>
          <div class="vlabel">[-][俯视][二维线框]</div>
          <div class="note"><div class="nrow">快捷键：<span class="nl">C</span></div><div class="nrow">半径输入<span class="nl">10</span></div></div>
          <div class="dyn">10</div>
          <span class="compass n1">北</span><span class="compass s1">南</span><span class="compass w1">西</span><span class="compass e1">东</span>
          <span class="cube-t">上</span>
          <span class="wcs-t">WCS</span>
        </div>
        <div class="vscroll">
          <svg class="chev" viewBox="0 0 10 6"><path d="M1 5l4-4 4 4"/></svg>
          <i class="thumb"></i>
          <svg class="chev down" viewBox="0 0 10 6"><path d="M1 1l4 4 4-4"/></svg>
        </div>
      </div>
      <div class="layoutbar">
        <div class="nav">
          <span>|◀</span><span>◀</span><span>▶</span><span>▶|</span>
        </div>
        <div class="ltab on">模型</div>
        <div class="ltab">布局1</div>
        <div class="ltab">布局2</div>
        <div class="hscroll">
          <i class="ht1"></i>
          <span class="hl">‹</span>
          <i class="ht2"></i>
          <span class="hr">›</span>
        </div>
      </div>
    </div>

    <aside class="rights">
      <div class="vbar short">
        <i class="vgrip"></i>
        <svg class="v"><use href="#o-a"/></svg>
        <svg class="v"><use href="#o-b"/></svg>
        <svg class="v"><use href="#o-c"/></svg>
        <svg class="v"><use href="#o-c"/></svg>
        <i class="hsep"></i>
        <svg class="v abc" viewBox="0 0 36 36"><path d="M11 10h20v21H11z" fill="url(#gw)"/><text x="1" y="16" class="abct">ABC</text><path d="M29 34l5-5v5z" fill="#111" stroke="none"/></svg>
        <svg class="v"><use href="#o-e"/></svg>
      </div>
    </aside>
  </main>

  <section class="cmd">
    <div class="cmdside">
      <i class="cgrip"></i>
      <svg class="ci" viewBox="0 0 14 14"><path d="M2 2l10 10M12 2L2 12" stroke="#fff" stroke-width="2.600"/></svg>
      <svg class="ci wr" viewBox="0 0 20 20"><path d="M3 3c3-2 7 0 6 5l9 8-3 3-8-9C3 11 1 7 3 3l3 3 2-2z" fill="#e4e4e4"/></svg>
    </div>
    <div class="cmdbody">
      <div class="hist">
        <div class="ln l1"><span class="z">选择要偏移的对象</span>, <span class="z">或</span> [<span class="z">退出</span>(E)/<span class="z">放弃</span>(U)] &lt;<span class="z">退出</span>&gt;: *<span class="z">取消</span>*</div>
        <div class="ln"><span class="z">命令</span>: C</div>
        <div class="ln">CIRCLE</div>
        <div class="ln"><span class="z">指定圆的圆心或</span> [<span class="z">三点</span>(3P)/<span class="z">两点</span>(2P)/<span class="z">切点、切点、半径</span>(T)]:</div>
      </div>
      <div class="input">
        <svg class="clock" viewBox="0 0 20 20"><circle cx="10" cy="10" r="8" fill="#e6e6e6" stroke="#777" stroke-width="1.500"/><path d="M10 10l5-5M10 10H5" stroke="#666" stroke-width="1.500"/></svg>
        <span class="inarr">▾</span>
        <span class="ln inline"><b>CIRCLE</b> <span class="z">指定圆的半径或</span> [<span class="opt"><span class="z">直径</span>(<span class="key">D</span>)</span>] &lt;149.0000&gt;:</span>
      </div>
    </div>
  </section>

  <footer class="status">
    <div class="coords">5164.2678, 4077.7232, 0.0000</div>
    <svg class="s"><use href="#s-snap"/></svg>
    <svg class="s"><use href="#s-dots"/></svg>
    <svg class="s"><use href="#s-grid"/></svg>
    <svg class="s"><use href="#s-ortho"/></svg>
    <svg class="s on"><use href="#s-polar"/></svg>
    <svg class="s on"><use href="#s-osnap"/></svg>
    <svg class="s on"><use href="#s-3d"/></svg>
    <svg class="s on"><use href="#s-otrack"/></svg>
    <svg class="s on"><use href="#s-ducs"/></svg>
    <svg class="s on"><use href="#s-dyn"/></svg>
    <svg class="s on"><use href="#s-lw"/></svg>
    <svg class="s on"><use href="#s-tp"/></svg>
    <svg class="s"><use href="#s-qp"/></svg>
    <svg class="s"><use href="#s-sc"/></svg>
    <svg class="s"><use href="#s-plus"/></svg>
    <span class="st-model">模型</span>
    <svg class="s"><use href="#s-paper"/></svg>
    <svg class="s"><use href="#s-twin"/></svg>
    <i class="st-dark"></i>
    <svg class="s anno"><use href="#s-anno"/></svg>
    <span class="st-scale">1:1</span><span class="st-up">▾</span>
    <svg class="s anno2"><use href="#s-anno2"/></svg>
    <svg class="s"><use href="#s-anno3"/></svg>
    <svg class="s gearbox"><use href="#s-gear"/></svg>
    <svg class="s lockm"><use href="#s-lock"/></svg>
    <svg class="s"><use href="#s-ball"/></svg>
    <div class="st-bulb"><svg class="s"><use href="#s-bulb"/></svg></div>
    <span class="st-dn">▾</span>
    <svg class="s"><use href="#s-win"/></svg>
    <i class="st-grip"></i>
  </footer>

  <div class="watermark">
    <svg class="wm-logo" viewBox="0 0 36 36"><path d="M8 6v22c0 3 3 4 5 3" fill="none" stroke="#c8ced9" stroke-width="2.400" stroke-linecap="round"/><path d="M13 26V7c0-3 3-4 6-2l13 10c2 2 2 4 0 6L19 32c-3 2-6 1-7 0" fill="none" stroke="#c8ced9" stroke-width="2.400" stroke-linecap="round"/><path d="M16 14v8l6-4z" fill="#c8ced9"/><path d="M24 14v8" stroke="#c8ced9" stroke-width="1.600"/></svg>
    <div class="wm-text">
      <div class="wm-zh">溜溜自学</div>
      <div class="wm-en">ZIXUE.3D66.COM</div>
    </div>
  </div>
</div>
</body>
</html>
```

FILE: styles.css
```css
* { box-sizing: border-box; }
html, body { margin: 0; padding: 0; background: #fff; }
body { font-family: "Noto Sans CJK SC", "Liberation Sans", sans-serif; overflow: hidden; }
i, em { font-style: normal; display: block; }
.defs { position: absolute; width: 0; height: 0; }

.app { position: relative; width: 1000px; height: 746px; display: flex; flex-direction: column; overflow: hidden; background: #6b6b6b; filter: blur(.35px); }
.app::after { content: ""; position: absolute; left: 0; top: 0; bottom: 0; width: 1px; background: #4a8fb8; z-index: 9; }

.topline { height: 1px; flex: none; background: linear-gradient(90deg, #4a96c2 695px, #c8c8c8 695px); }

/* application button lies over the title and menu rows */
.appbtn { position: absolute; left: 1px; top: 8px; width: 38px; height: 38px; z-index: 3; background: linear-gradient(#868686, #5f5f5f); border: 1px solid #333; }
.applogo { position: absolute; left: 5px; top: 4px; width: 22px; height: 26px; }
.apparr { position: absolute; left: 28px; top: 10px; font-size: 9px; line-height: 12px; color: #111; }

/* title row */
.titlebar { height: 35px; flex: none; display: flex; align-items: flex-end; background: #fff; padding-left: 44px; }
.qat { width: 57px; height: 27px; display: flex; align-items: center; gap: 6px; padding: 0 2px; background: linear-gradient(#9a9a9a, #6f6f6f); border: 1px solid #c9c9c9; }
.q { width: 24px; height: 24px; fill: none; stroke: #555; stroke-width: 1.500; }
.qat-more { width: 24px; height: 27px; background: linear-gradient(#8a8a8a, #666); color: #111; font-size: 11px; line-height: 27px; text-align: center; letter-spacing: -3px; }
.doc { width: 163px; padding: 9px 0 0 55px; height: 35px; font: 14.400px/20px "Open Sans", sans-serif; color: #222; white-space: nowrap; }
.infobar { width: 518px; height: 27px; display: flex; align-items: center; background: linear-gradient(#8b8b8b, #5f5f5f); }
.info-tri { width: 16px; font-size: 13px; color: #111; text-align: center; }
.search { width: 209px; height: 25px; margin-top: 1px; background: linear-gradient(#fff, #ededed); color: #8f8f8f; font-size: 13px; line-height: 24px; padding-left: 4px; font-style: italic; border-top: 1px solid #888; }
.bi { width: 22px; height: 22px; flex: none; margin-left: 3px; }
.user { margin-left: 6px; }
.login { color: #d6d6d6; font-size: 13px; margin-left: 5px; }
.arr { color: #222; font-size: 10px; }
.login-arr { margin-left: 73px; }
.x { margin-left: 10px; }
.a360 { margin-left: 6px; }
.a360-arr { margin-left: 4px; }
.help-round { width: 22px; height: 22px; margin: 0 6px 0 22px; border-radius: 50%; background: #fdfdfd; border: 2px solid #555; color: #2c5ea8; font: bold 15px/18px "Liberation Sans", sans-serif; text-align: center; }
.winctl { flex: 1; display: flex; justify-content: space-between; padding: 0 23px 0 50px; align-self: flex-start; margin-top: 11px; }
.wc { width: 13px; height: 13px; fill: none; stroke: #a8a8a8; stroke-width: 1; }

/* menu */
.menubar { height: 24px; flex: none; display: flex; gap: 25px; align-items: center; padding-left: 53px; background: linear-gradient(#9e9e9e, #5e5e5e 55%, #6a6a6a); color: #dcdcdc; font-size: 14px; line-height: 20px; border-top: 1px solid #555; border-bottom: 1px solid #555; white-space: nowrap; text-shadow: 0 0 1px #555; }
.menubar span { font-family: "Liberation Sans", "Noto Sans CJK SC", sans-serif; margin-top: 2px; }
.mdi { margin-left: auto; display: flex; gap: 5px; padding-right: 5px; }
.m { width: 12px; height: 12px; fill: none; stroke: #e8e8e8; }

/* tabs */
.tabs { height: 35px; flex: none; display: flex; align-items: flex-end; padding: 0 0 5px 18px; background: linear-gradient(#a0a0a0, #8c8c8c); }
.tab { width: 156px; height: 28px; margin-right: -12px; display: flex; align-items: center; font: 15px/20px "Liberation Sans", "Noto Sans CJK SC", sans-serif; color: #6a6a6a; clip-path: path("M0 28C11 28 11 2 26 2H134C148 2 148 28 156 28Z"); }
.tab.active { padding-left: 20px; background: linear-gradient(#d2d2d2, #9d9d9d); color: #222; position: relative; z-index: 1; }
.tab.t2, .tab.t3 { width: 152px; clip-path: path("M0 28C9 28 9 2 22 2H128C142 2 142 28 152 28Z"); background: linear-gradient(#a8a8a8, #8e8e8e); }
.tab.t2 { padding-left: 22px; font-size: 14px; }
.tab.t3 { padding-left: 25px; width: 155px; }
.tab b { margin-left: 35px; font: bold 12px "DejaVu Sans", sans-serif; color: #777; }
.tabplus { width: 26px; height: 18px; margin: 0 0 3px 21px; }

/* toolbars */
.tb1 { height: 37px; flex: none; display: flex; align-items: center; background: #efefef; overflow: hidden; border-top: 1px solid #555; }
.grip { width: 9px; height: 100%; flex: none; background: repeating-linear-gradient(#666 0 1px, #999 1px 3px); }
.grip.dark { width: 10px; background-color: #555; background-image: repeating-linear-gradient(#555 0 2px, #8a8a8a 2px 3px); }
.sep { width: 7px; flex: none; height: 31px; background: linear-gradient(90deg, transparent 3px, #bcbcbc 3px 4px, transparent 4px); }
.b { width: 36px; height: 30px; flex: none; fill: none; stroke: #555; stroke-width: 1.500; }
.b.n { width: 30px; height: 26px; }
.dn { width: 12px; flex: none; color: #aaa; font-size: 12px; }
.zwin { width: 36px; height: 30px; flex: none; position: relative; }
.zwin::before { content: ""; position: absolute; left: 5px; top: 1px; width: 22px; height: 20px; border: 1.500px solid #444; background: #f2f2f2; }
.zwin .b { position: relative; }
.helpbtn { width: 26px; height: 27px; margin: 0 5px; flex: none; border: 2px solid #777; border-radius: 4px; background: linear-gradient(#fff, #ddd); font: bold 21px/23px "Liberation Sans", sans-serif; color: #444; text-align: center; }
.bigA { font: 36px/36px "Liberation Sans", sans-serif; color: #444; margin-left: 5px; }

.tb2 { height: 36px; flex: none; display: flex; background: #5d5d5d; margin-top: 4px; }
.panel { display: flex; align-items: flex-start; background: #eee; overflow: hidden; }
.p1 { width: 245px; flex: none; }
.p2 { width: 423px; flex: none; padding-left: 3px; }
.p3 { flex: 1; }
.gapgrip { width: 10px; flex: none; background: linear-gradient(90deg, transparent 5px, #8a8a8a 5px 8px, transparent 8px); }
.gapgrip.g11 { width: 11px; }
.panel .grip { height: 36px; width: 9px; }
.combo-col { flex: none; }
.w162 { width: 163px; }
.w279 { width: 279px; margin-left: 4px; }
.w139 { width: 140px; }
.w149 { width: 149px; }
.w9 { flex: 1; min-width: 9px; }
.combo { height: 21px; display: flex; align-items: center; background: #cfcfcf; padding-left: 8px; font: 14px/21px "Liberation Sans", "Noto Sans CJK SC", sans-serif; color: #8e8e8e; border-radius: 2px; position: relative; white-space: nowrap; }
.cv { position: absolute; right: 8px; top: 8px; width: 10px; height: 6px; fill: none; stroke: #b2b2b2; stroke-width: 1.200; }
.under { height: 15px; border-left: 1px solid #888; margin-left: 1px; }
.c { width: 36px; height: 32px; flex: none; fill: none; stroke: #555; stroke-width: 1.300; margin-top: 2px; }
.lay { width: 29px; }
.c.last { width: 34px; }
.p1 .c:last-child { margin-left: 0; }
.p2 .combo { padding-left: 3px; }
.mini { width: 13px; height: 14px; flex: none; margin-right: 2px; }
.swatch { width: 10px; height: 10px; flex: none; background: #fff; border: 1px solid #222; margin: 0 3px 0 1px; }
.s-layer { margin-left: 5px; }
.zero { font-size: 15px; margin-left: 3px; }
.serif { font-family: "Liberation Mono", monospace; font-size: 12.500px; padding-left: 5px; }
.by { color: #8a8a8a; }
.vsep { width: 6px; flex: none; height: 36px; background: linear-gradient(90deg, transparent 2px, #aaa 2px 3px, transparent 3px); }
.ltline { width: 56px; height: 1px; background: #333; margin-right: 4px; flex: none; }
.ltline.short { width: 8px; margin-left: -6px; }

/* work area */
.work { height: 418px; flex: none; display: flex; background: #676767; }
.lefts { width: 85px; flex: none; display: flex; gap: 4px; padding: 3px 0 0 2px; overflow: hidden; }
.vbar { width: 37px; height: 430px; flex: none; background: #eee; display: flex; flex-direction: column; align-items: center; }
.vbar.short { height: 226px; }
.vgrip { width: 100%; height: 8px; flex: none; background: #555; background-image: radial-gradient(#9c9c9c .6px, transparent .7px); background-size: 3px 3px; background-position: 8px 1px; margin-bottom: 1px; }
.v { width: 35px; height: 35.400px; flex: none; fill: none; stroke: #555; stroke-width: 1.300; transform: scale(.86); }
.hsep { width: 34px; height: 1px; flex: none; background: #aaa; margin: 3px 0 4px; }
.abct { font: 11px "Liberation Sans", sans-serif; fill: #111; stroke: none; }

.center { width: 870px; flex: none; display: flex; flex-direction: column; padding-top: 5px; }
.viewrow { display: flex; height: 394px; flex: none; }
.canvas { width: 847px; height: 394px; flex: none; background: #1f2733; position: relative; overflow: hidden; }
.draw { display: block; width: 847px; height: 394px; }
.w { fill: none; stroke: #d9dadb; stroke-width: 1.100; }
.gap { fill: #1f2733; }
.dash-g { stroke: #2a7a34; stroke-dasharray: 3 3; stroke-width: 1; }
.dash-w { stroke: #8a8f96; stroke-dasharray: 2 3; stroke-width: 1; }
.tick-g { stroke: #2f9a3f; fill: none; }
.tick-m { stroke: #a566b4; fill: none; }
.tick-w { stroke: #ccc; fill: none; }
.cross { stroke: #c9c9c9; fill: none; }
.ucs { fill: none; stroke: #c9cbcf; stroke-width: 1.400; }
.ucs .thin { stroke-width: 1; }
.ring { fill: none; stroke: #4b4f56; stroke-width: 6; }
.cube { fill: #9a9c9e; stroke: #b8b8b8; }
.wcs { fill: #6f7581; stroke: #8a8f99; }
.vlabel { position: absolute; left: 3px; top: 5px; font-size: 11px; line-height: 15px; color: #b4b6ba; }
.note { position: absolute; left: 477px; top: 45px; font: 300 30px/38px "Noto Sans CJK SC", sans-serif; color: #c8372d; white-space: nowrap; }
.nrow { height: 38px; }
.nl { font-family: "Liberation Serif", serif; font-size: 29px; line-height: 30px; }
.dyn { position: absolute; left: 301px; top: 123px; width: 56px; height: 22px; background: #fff; color: #222; font: 14px/22px "Liberation Sans", sans-serif; padding-left: 3px; }
.compass { position: absolute; font-size: 11px; line-height: 12px; color: #a6a6a6; }
.n1 { left: 796px; top: 10px; }
.s1 { left: 796px; top: 72px; }
.w1 { left: 766px; top: 41px; }
.e1 { left: 827px; top: 41px; }
.cube-t { position: absolute; left: 795px; top: 38px; font-size: 13px; line-height: 17px; color: #5f5f5f; }
.wcs-t { position: absolute; left: 786px; top: 96px; font: 10px/13px "Liberation Sans", sans-serif; color: #9a9eaa; }
.vscroll { width: 23px; height: 394px; flex: none; background: #efefef; position: relative; }
.chev { position: absolute; left: 6px; top: 7px; width: 10px; height: 6px; fill: none; stroke: #333; stroke-width: 1.800; }
.chev.down { top: auto; bottom: 8px; }
.thumb { position: absolute; left: 2px; top: 145px; width: 18px; height: 19px; background: #cfcfcf; }

.layoutbar { height: 18px; width: 870px; flex: none; background: #f2f2f2; display: flex; position: relative; border-top: 1px solid #bbb; }
.nav { width: 68px; display: flex; padding-left: 2px; background: #e8e8e8; }
.nav span { width: 16.500px; font-size: 11px; line-height: 17px; text-align: center; color: #666; border-right: 1px solid #ccc; letter-spacing: -1px; }
.ltab { position: relative; font: 13px/17px "Liberation Sans", "Noto Sans CJK SC", sans-serif; width: 53px; padding-left: 8px; color: #333; white-space: nowrap; }
.ltab::after { content: ""; position: absolute; right: 3px; top: 0; width: 1px; height: 17px; background: #666; transform: skewX(-28deg); }
.ltab.on { width: 51px; background: #1f2733; color: #dedede; margin: 0 2px 0 2px; padding-left: 12px; clip-path: polygon(0 0, 100% 0, calc(100% - 7px) 100%, 7px 100%); }
.ltab.on::after { display: none; }
.hscroll { position: absolute; left: 560px; top: 0; right: 0; height: 17px; background: #f0f0f0; }
.ht1 { position: absolute; left: 0; top: 1px; width: 5px; height: 15px; background: #cfcfcf; }
.ht2 { position: absolute; left: 249px; top: 1px; width: 19px; height: 15px; background: #cfcfcf; }
.hl, .hr { position: absolute; top: -3px; font: bold 15px/20px "Liberation Sans", sans-serif; color: #444; }
.hl { left: 14px; }
.hr { left: 276px; }

.rights { flex: 1; padding: 3px 0 0 4px; }

/* command */
.cmd { height: 134px; flex: none; display: flex; background: #c4c4c4; border-top: 5px solid #666; }
.cmdside { width: 28px; flex: none; background: linear-gradient(90deg, #595959, #7a7a7a); display: flex; flex-direction: column; align-items: center; }
.cgrip { width: 28px; height: 13px; background-image: radial-gradient(#bbb .6px, transparent .7px); background-size: 3px 3px; background-position: 3px 2px; }
.ci { width: 14px; height: 14px; fill: none; margin-top: 5px; }
.ci.wr { width: 22px; height: 22px; margin-top: 9px; }
.cmdbody { flex: 1; display: flex; flex-direction: column; }
.hist { height: 102px; padding: 13px 0 0 3px; }
.ln { display: block; height: 21.500px; font: 16.600px/21.500px "DejaVu Sans Mono", monospace; color: #222; white-space: pre; }
.l1 { letter-spacing: .22px; }
.z { font-family: "Noto Sans CJK SC", sans-serif; font-size: 18.300px; }
.input { height: 27px; display: flex; align-items: center; background: #fff; border-top: 1px solid #999; padding-left: 6px; }
.clock { width: 18px; height: 18px; flex: none; margin-left: 1px; }
.inarr { width: 16px; font-size: 10px; color: #888; text-align: center; }
.inline { line-height: 25px; height: 25px; }
.inline b { font-weight: bold; color: #111; }
.opt { background: #dcdcdc; display: inline-block; height: 25px; padding: 0 2px; }
.key { color: #1c20c8; }

/* status */
.status { flex: 1; display: flex; align-items: center; background: linear-gradient(#8e8e8e, #6e6e6e); border-top: 1px solid #aaa; overflow: hidden; white-space: nowrap; }
.status > * { flex: none; }
.coords { width: 253px; padding-left: 12px; font: 12.400px/20px "Liberation Mono", monospace; color: #222; }
.s { width: 20.400px; height: 18px; flex: none; fill: none; stroke: #444; stroke-width: 1; }
.s.on { background: linear-gradient(#8fc5dc, #d6edf4); height: 22px; }
.st-model { margin-left: 96px; margin-right: 3px; font-size: 13.500px; line-height: 20px; color: #111; }
.st-dark { width: 19px; height: 22px; background: #777; margin-right: 2px; }
.s.anno { width: 20px; }
.st-scale { font: 14px/20px "DejaVu Sans Mono", monospace; color: #111; letter-spacing: -2px; margin-top: 3px; width: 22px; }
.st-up { color: #111; font-size: 11px; transform: rotate(180deg); width: 9px; margin-left: 1px; }
.anno2 { margin-left: 4px; }
.gearbox { margin-left: 5px; background: #bbb; height: 22px; }
.lockm { margin-left: 2px; }
.st-bulb { width: 21px; height: 20px; margin-left: 7px; background: #9a9a9a; display: flex; justify-content: center; }
.st-dn { font-size: 10px; color: #111; width: 15px; text-align: center; }
.status .st-grip { flex: 1; height: 22px; background-image: radial-gradient(#ccc .6px, transparent .8px); background-size: 3px 3px; clip-path: polygon(100% 0, 100% 100%, 0 100%); }

/* watermark */
.watermark { position: absolute; left: 765px; top: 642px; width: 180px; height: 85px; background: #1f3158; display: flex; align-items: center; padding-left: 12px; z-index: 5; }
.wm-logo { width: 36px; height: 36px; flex: none; }
.wm-text { margin: -6px 0 0 13px; display: flex; flex-direction: column; }
.wm-zh { font-size: 25px; line-height: 30px; font-weight: 500; letter-spacing: 2px; color: #d7dbe2; white-space: nowrap; }
.wm-en { font: 9.500px/13px "Liberation Sans", sans-serif; letter-spacing: 1.900px; color: #aab2c0; white-space: nowrap; }
```
